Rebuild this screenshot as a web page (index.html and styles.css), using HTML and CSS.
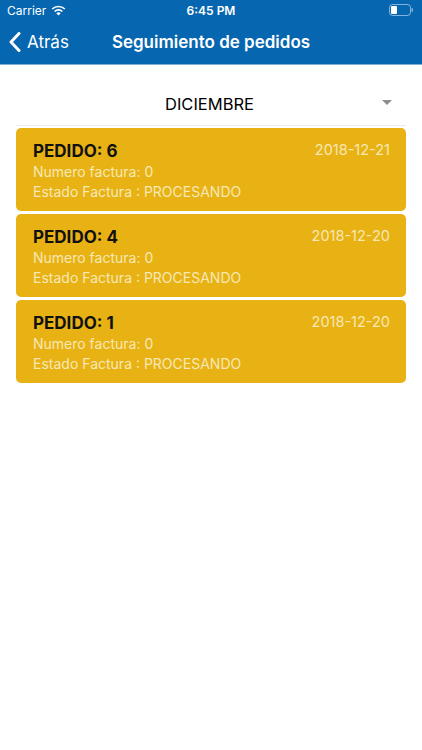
FILE: index.html
```html
<!DOCTYPE html>
<html lang="es">
<head>
  <meta charset="UTF-8" />
  <meta name="viewport" content="width=device-width, initial-scale=1.0" />
  <title>Seguimiento de pedidos</title>
  <link rel="stylesheet" href="styles.css">
</head>
<body>
  <header class="topbar">
    <div class="status">
      <div class="status-left">
        <span>Carrier</span>
        <svg class="wifi" width="15" height="11" viewBox="0 0 15 11">
          <path d="M7.5 10.5 L5.3 8.2 A3.2 3.2 0 0 1 9.7 8.2 Z" fill="#fff"/>
          <path d="M3.6 6.5 A5.6 5.6 0 0 1 11.4 6.5" stroke="#fff" stroke-width="1.6" fill="none"/>
          <path d="M1.2 4 A9 9 0 0 1 13.8 4" stroke="#fff" stroke-width="1.6" fill="none"/>
        </svg>
      </div>
      <div class="status-time">6:45 PM</div>
      <div class="status-right">
        <svg width="25" height="12" viewBox="0 0 25 12">
          <rect x="0.5" y="0.5" width="21" height="11" rx="3" fill="none" stroke="#fff" stroke-opacity="0.5"/>
          <rect x="2" y="2" width="6" height="8" rx="1" fill="#fff"/>
          <rect x="22.5" y="4" width="1.5" height="4" rx="0.7" fill="#fff" fill-opacity="0.5"/>
        </svg>
      </div>
    </div>
    <nav class="navbar">
      <a class="back">
        <svg width="12" height="20" viewBox="0 0 12 20">
          <path d="M10 1.5 L2 10 L10 18.5" stroke="#fff" stroke-width="3" fill="none" stroke-linecap="round" stroke-linejoin="round"/>
        </svg>
        <span>Atrás</span>
      </a>
      <h1 class="nav-title">Seguimiento de pedidos</h1>
    </nav>
  </header>

  <main class="content">
    <div class="month-picker">
      <span class="month">DICIEMBRE</span>
      <span class="caret"></span>
    </div>

    <div class="orders">
      <div class="order-card">
        <div class="order-head">
          <span class="order-id">PEDIDO: 6</span>
          <span class="order-date">2018-12-21</span>
        </div>
        <div class="order-line">Numero factura: 0</div>
        <div class="order-line">Estado Factura : PROCESANDO</div>
      </div>
      <div class="order-card">
        <div class="order-head">
          <span class="order-id">PEDIDO: 4</span>
          <span class="order-date">2018-12-20</span>
        </div>
        <div class="order-line">Numero factura: 0</div>
        <div class="order-line">Estado Factura : PROCESANDO</div>
      </div>
      <div class="order-card">
        <div class="order-head">
          <span class="order-id">PEDIDO: 1</span>
          <span class="order-date">2018-12-20</span>
        </div>
        <div class="order-line">Numero factura: 0</div>
        <div class="order-line">Estado Factura : PROCESANDO</div>
      </div>
    </div>
  </main>
</body>
</html>
```

FILE: styles.css
```css
body {
  font-family: Inter, 'Liberation Sans', sans-serif;
  margin: 0;
  background: #fff;
  color: #000;
}
.topbar {
  background: #0666b0;
  color: #fff;
  border-bottom: 1px solid #7fb0d8;
}
.status {
  height: 20px;
  display: flex;
  align-items: center;
  justify-content: space-between;
  padding: 0 8px 0 7px;
  font-size: 12px;
  position: relative;
}
.status-left {
  display: flex;
  align-items: center;
  gap: 5px;
}
.status-time {
  position: absolute;
  left: 0;
  right: 0;
  text-align: center;
  font-weight: 600;
}
.status-right svg {
  display: block;
}
.navbar {
  height: 44px;
  display: flex;
  align-items: center;
  position: relative;
}
.back {
  display: flex;
  align-items: center;
  gap: 6px;
  padding-left: 9px;
  font-size: 17px;
  cursor: pointer;
}
.back svg {
  display: block;
}
.nav-title {
  position: absolute;
  left: 0;
  right: 0;
  margin: 0;
  text-align: center;
  font-size: 17px;
  font-weight: 600;
  pointer-events: none;
}
.content {
  padding: 0 16px;
}
.month-picker {
  height: 61px;
  box-sizing: border-box;
  padding-top: 17px;
  display: flex;
  align-items: center;
  justify-content: center;
  position: relative;
  border-bottom: 1px solid #ececec;
  margin-bottom: 2px;
}
.month {
  font-size: 16.5px;
  margin-left: -3px;
}
.caret {
  position: absolute;
  right: 14px;
  top: 35px;
  border-left: 5px solid transparent;
  border-right: 5px solid transparent;
  border-top: 5px solid #8e8e8e;
}
.orders {
  display: flex;
  flex-direction: column;
  gap: 3px;
}
.order-card {
  background: #e8b214;
  border-radius: 5px;
  height: 83px;
  box-sizing: border-box;
  padding: 12px 16px 0 17px;
  color: #f7e8b4;
  font-size: 14px;
}
.order-head {
  display: flex;
  justify-content: space-between;
  align-items: flex-start;
  height: 22px;
}
.order-id {
  color: #111;
  font-weight: 700;
  font-size: 17px;
  line-height: 22px;
}
.order-date {
  font-size: 14.5px;
  line-height: 20px;
}
.order-line {
  font-size: 14px;
  line-height: 20px;
}
```
